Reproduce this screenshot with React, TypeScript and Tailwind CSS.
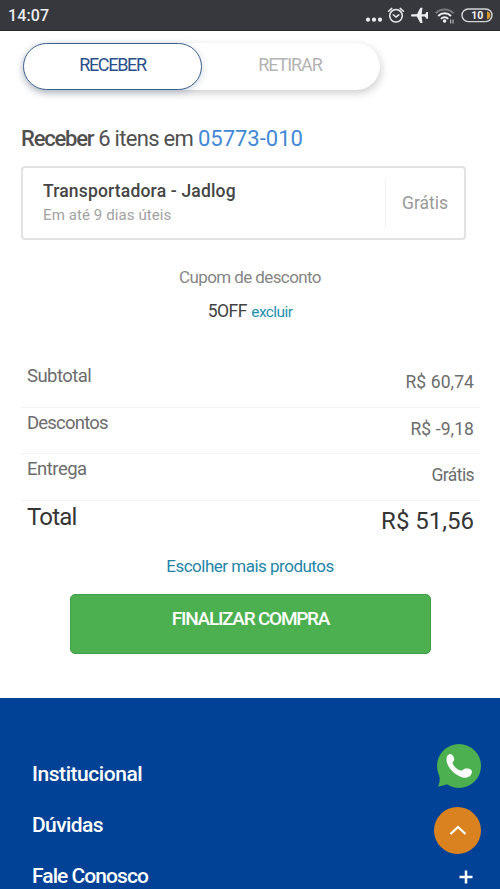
import { ReactNode } from "react";
import clsx from "clsx";

type SummaryRowProps = {
  label: string;
  value: string;
  labelClass: string;
  valueClass: string;
};

const SUMMARY: SummaryRowProps[] = [
  {
    label: "Subtotal",
    value: "R$ 60,74",
    labelClass: "tracking-[-0.55px]",
    valueClass: "tracking-[0.1px]",
  },
  {
    label: "Descontos",
    value: "R$ -9,18",
    labelClass: "tracking-[-0.8px]",
    valueClass: "tracking-[0.1px]",
  },
  {
    label: "Entrega",
    value: "Grátis",
    labelClass: "tracking-[-0.5px]",
    valueClass: "tracking-[-0.6px]",
  },
];

const StatusBar = () => {
  return (
    <header className="flex h-[31px] shrink-0 items-center justify-between border-b border-[#29292c] bg-[#37383d] pr-[7px] pl-2 text-[#ededf0]">
      <span className="pt-[2px] text-[16px] font-medium tracking-[0.1px]">
        14:07
      </span>
      <svg width="128" height="22" viewBox="365 4 128 22" fill="none">
        <g fill="#ededf0">
          <circle cx="368" cy="19.7" r="2.1" />
          <circle cx="374" cy="19.7" r="2.1" />
          <circle cx="380" cy="19.7" r="2.1" />
        </g>
        <g stroke="#ededf0" strokeWidth="1.5" strokeLinecap="round">
          <circle cx="396" cy="15.8" r="6.3" />
          <path d="M393.3 14.8l2.7 2.3 2.8-2.3M388.6 11.2l3.2-2.8M403.4 11.2l-3.2-2.8" />
        </g>
        <g fill="#ededf0">
          <rect x="411" y="14.2" width="17" height="2.4" rx="1.2" />
          <path d="M416.3 15.4l4-7.600h2.200l-1 7.600 1 7.600h-2.200z" />
          <path d="M424.300 15.400l2.200-3.400h1.500v6.800h-1.500z" />
        </g>
        <g strokeWidth="2" fill="none">
          <path d="M435.7 13.2a12.6 12.6 0 0 1 17.8 0" stroke="#77787c" />
          <path d="M438.2 16a9 9 0 0 1 12.8 0" stroke="#ededf0" />
          <path d="M441 18.9a5 5 0 0 1 7.2 0" stroke="#ededf0" />
        </g>
        <circle cx="444.6" cy="21" r="1.8" fill="#ededf0" />
        <path d="M450.7 19.500v4M453 19.500v4" stroke="#c9c9cc" strokeWidth="1" />
        <rect
          x="462"
          y="9"
          width="30"
          height="12.6"
          rx="6.3"
          stroke="#d5d5d8"
          strokeWidth="1.4"
        />
        <path d="M487 11.2c2.4.8 3.4 2.3 3.4 4.1s-1 3.3-3.4 4.1z" fill="#d9982f" />
        <text
          x="477.2"
          y="19"
          textAnchor="middle"
          fontSize="10.5"
          fontWeight="700"
          fill="#f2f2f2"
        >
          10
        </text>
      </svg>
    </header>
  );
};

const DeliveryToggle = () => {
  return (
    <div className="mt-[12px] ml-[23px] flex h-[47px] w-[357px] rounded-full bg-white text-[18px] shadow-[1px_3px_8px_rgba(0,0,0,0.2)]">
      <button className="h-[47px] w-[179px] rounded-full border border-[#3d5f8c] bg-white pb-[5px] text-[#29508a] tracking-[-1.3px] shadow-[0_2px_7px_rgba(50,85,130,0.24)]">
        RECEBER
      </button>
      <button className="w-[178px] pr-[2px] pb-[5px] text-[#b3b3b3] tracking-[-1.1px]">
        RETIRAR
      </button>
    </div>
  );
};

const ShippingCard = () => {
  return (
    <div className="mt-[11px] ml-[21px] flex h-[74px] w-[445px] items-center rounded-[4px] border-2 border-[#e2e2e2]">
      <div className="flex-1 pl-5">
        <p className="text-[17.5px] leading-6 font-medium text-[#454545] tracking-[0.17px]">
          Transportadora - Jadlog
        </p>
        <p className="text-[15px] leading-6 text-[#a2a2a2] tracking-[0.1px]">
          Em até 9 dias úteis
        </p>
      </div>
      <p className="h-[48px] w-[79px] border-l border-[#f1f1f1] text-center text-[17.5px] leading-[48px] text-[#999]">
        Grátis
      </p>
    </div>
  );
};

const SummaryRow = ({
  label,
  value,
  labelClass,
  valueClass,
}: SummaryRowProps) => {
  return (
    <div className="flex h-[46.5px] justify-between border-b border-[#f4f4f4] px-1.5 text-[#6c6c6c]">
      <span className={clsx("pt-[3px] text-[18.5px] leading-6", labelClass)}>
        {label}
      </span>
      <span className={clsx("pt-[9px] text-[17.5px] leading-6", valueClass)}>
        {value}
      </span>
    </div>
  );
};

type FooterLinkProps = {
  className: string;
  children: ReactNode;
};

const FooterLink = ({ className, children }: FooterLinkProps) => {
  return (
    <li
      className={clsx(
        "h-[51px] text-[21px] leading-[30px] font-medium",
        className,
      )}
    >
      {children}
    </li>
  );
};

const FloatingActions = () => {
  return (
    <div className="absolute top-[46px] right-[19px] flex flex-col items-end">
      <button aria-label="WhatsApp">
        <svg width="45" height="45" viewBox="0 0 45 45">
          <circle cx="23" cy="22" r="22" fill="#4caf50" />
          <path d="M3 31c1.500 4 .5 8-1 11.500 4-.4 8-1.500 12-3.500z" fill="#4caf50" />
          <path
            d="M11.500 11.500c1-1.300 3.400-2.200 4.800-.6 1.400 1.700 2.200 3.400 1.900 5-.2 1.500-1.900 1.700-1.600 3 .8 3.100 4.300 6.600 8.200 7.600 1.500.4 2-.8 3.200-1.500 1.700-.9 5.900-.3 7.200.9 1.500 1.500.5 4.500-1.200 6-2.600 2.200-6.300 2.200-9.500.9-6.400-2.600-11.500-7.800-13.400-13.700-.8-2.700-1-5.600.4-7.600z"
            fill="#fff"
          />
        </svg>
      </button>
      <button
        aria-label="Voltar ao topo"
        className="mt-[18px] flex h-[47px] w-[47px] items-center justify-center rounded-full bg-[#d9821f]"
      >
        <svg width="18" height="11" viewBox="0 0 18 11" fill="none">
          <path d="M1.500 9L9 2l7.500 7" stroke="#fff" strokeWidth="2.200" />
        </svg>
      </button>
    </div>
  );
};

export default function App() {
  return (
    <div className="flex h-[889px] w-[500px] flex-col overflow-hidden bg-white font-['Roboto',sans-serif]">
      <StatusBar />
      <main className="h-[667px] shrink-0">
        <DeliveryToggle />
        <h1 className="mt-[33px] ml-[21px] h-8 text-[22px] leading-8 text-[#505050]">
          <span className="font-medium tracking-[-1.2px]">Receber</span>
          <span className="tracking-[-0.7px]"> 6 itens em </span>
          <span className="text-[#4188d6]">05773-010</span>
        </h1>
        <ShippingCard />
        <div className="mt-[25px] text-center leading-6">
          <p className="text-[17px] text-[#858585] tracking-[-0.6px]">
            Cupom de desconto
          </p>
          <p className="mt-[10px] text-[17.5px] text-[#424242]">
            <span className="tracking-[-0.5px]">5OFF</span>{" "}
            <span className="text-[15.5px] text-[#238fae] tracking-[-0.6px]">
              excluir
            </span>
          </p>
        </div>
        <section className="mt-[37px] ml-[21px] w-[459px]">
          {SUMMARY.map((row) => (
            <SummaryRow key={row.label} {...row} />
          ))}
          <div className="flex justify-between px-1.5 text-[24px] leading-8 text-[#353535]">
            <span className="tracking-[-0.8px]">Total</span>
            <span className="pt-1">R$ 51,56</span>
          </div>
        </section>
        <p className="mt-[17px] text-center text-[17px] leading-6 text-[#2485a8] tracking-[-0.5px]">
          Escolher mais produtos
        </p>
        <button className="mt-4 ml-[70px] block h-[60px] w-[361px] rounded-[5px] border border-[#449d48] bg-[#4caf50] pb-2 text-[19px] font-medium text-white tracking-[-1.25px]">
          FINALIZAR COMPRA
        </button>
      </main>
      <footer className="relative flex-1 bg-[#024296] text-white">
        <ul className="pt-[61px] pl-8">
          <FooterLink className="tracking-[-0.45px]">Institucional</FooterLink>
          <FooterLink className="tracking-[-0.6px]">Dúvidas</FooterLink>
          <FooterLink className="tracking-[-0.95px]">Fale Conosco</FooterLink>
        </ul>
        <FloatingActions />
        <svg
          className="absolute top-[172px] left-[459px]"
          width="14"
          height="14"
          viewBox="0 0 14 14"
        >
          <path d="M7 .5v13M.5 7h13" stroke="#fff" strokeWidth="2.500" />
        </svg>
      </footer>
    </div>
  );
}
